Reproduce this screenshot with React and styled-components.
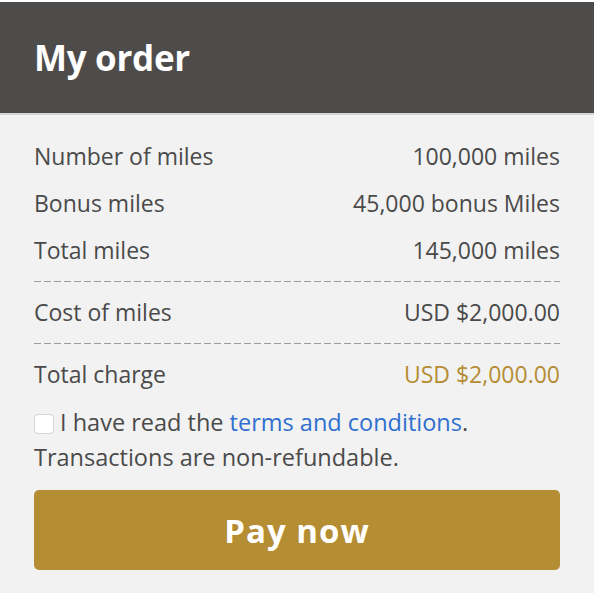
import React from "react";
import styled, { createGlobalStyle } from "styled-components";

const GlobalStyle = createGlobalStyle`
  body {
    margin: 0;
    background: #ffffff;
    font-family: "Open Sans", "Noto Sans", sans-serif;
  }
`;

export default function App() {
  return (
    <>
      <GlobalStyle />
      <Card>
        <Header>
          <Title>My order</Title>
        </Header>
        <Body>
          <Group>
            <Row>
              <span>Number of miles</span>
              <span>100,000 miles</span>
            </Row>
            <Row>
              <span>Bonus miles</span>
              <span>45,000 bonus Miles</span>
            </Row>
            <Row>
              <span>Total miles</span>
              <span>145,000 miles</span>
            </Row>
          </Group>
          <Divider />
          <Group>
            <Row>
              <span>Cost of miles</span>
              <span>USD $2,000.00</span>
            </Row>
          </Group>
          <Divider />
          <Group>
            <Row>
              <span>Total charge</span>
              <Amount>USD $2,000.00</Amount>
            </Row>
          </Group>
          <Terms>
            <Check type="checkbox" />
            I have read the <TermsLink href="#">terms and conditions</TermsLink>.
            <br />
            Transactions are non-refundable.
          </Terms>
          <PayButton type="button">Pay now</PayButton>
        </Body>
      </Card>
    </>
  );
}

const Card = styled.div`
  margin-top: 2px;
  background: #f2f2f2;
`;

const Header = styled.header`
  height: 111px;
  background: #4d4c4a;
  border-bottom: 2px solid #d6d6d6;
  display: flex;
  align-items: center;
  padding-left: 34px;
`;

const Title = styled.h1`
  margin: 0;
  color: #ffffff;
  font-size: 35px;
  font-weight: 700;
  letter-spacing: -0.3px;
`;

const Body = styled.div`
  padding: 17px 34px 23px;
  color: #4a4a4a;
`;

const Group = styled.div`
  display: flex;
  flex-direction: column;
`;

const Row = styled.div`
  display: flex;
  justify-content: space-between;
  align-items: center;
  height: 47px;
  font-size: 23px;
`;

const Amount = styled.span`
  color: #b58d32;
`;

const Divider = styled.div`
  height: 1px;
  margin: 8px 0 6px;
  background: repeating-linear-gradient(
    to right,
    #9c9c9c 0 7px,
    transparent 7px 10px
  );
`;

const Terms = styled.p`
  margin: 8px 0 0;
  font-size: 23.5px;
  line-height: 35px;
`;

const Check = styled.input`
  appearance: none;
  width: 20px;
  height: 20px;
  margin: 0 6px 0 0;
  vertical-align: -3px;
  background: #ffffff;
  border: 1px solid #d4d4d4;
  border-radius: 4px;
`;

const TermsLink = styled.a`
  color: #2f6fcf;
  text-decoration: none;
`;

const PayButton = styled.button`
  display: block;
  width: 100%;
  height: 80px;
  margin-top: 15px;
  border: none;
  border-radius: 5px;
  background: #b58d33;
  color: #ffffff;
  font-family: inherit;
  font-size: 33px;
  font-weight: 700;
  letter-spacing: 1px;
`;
